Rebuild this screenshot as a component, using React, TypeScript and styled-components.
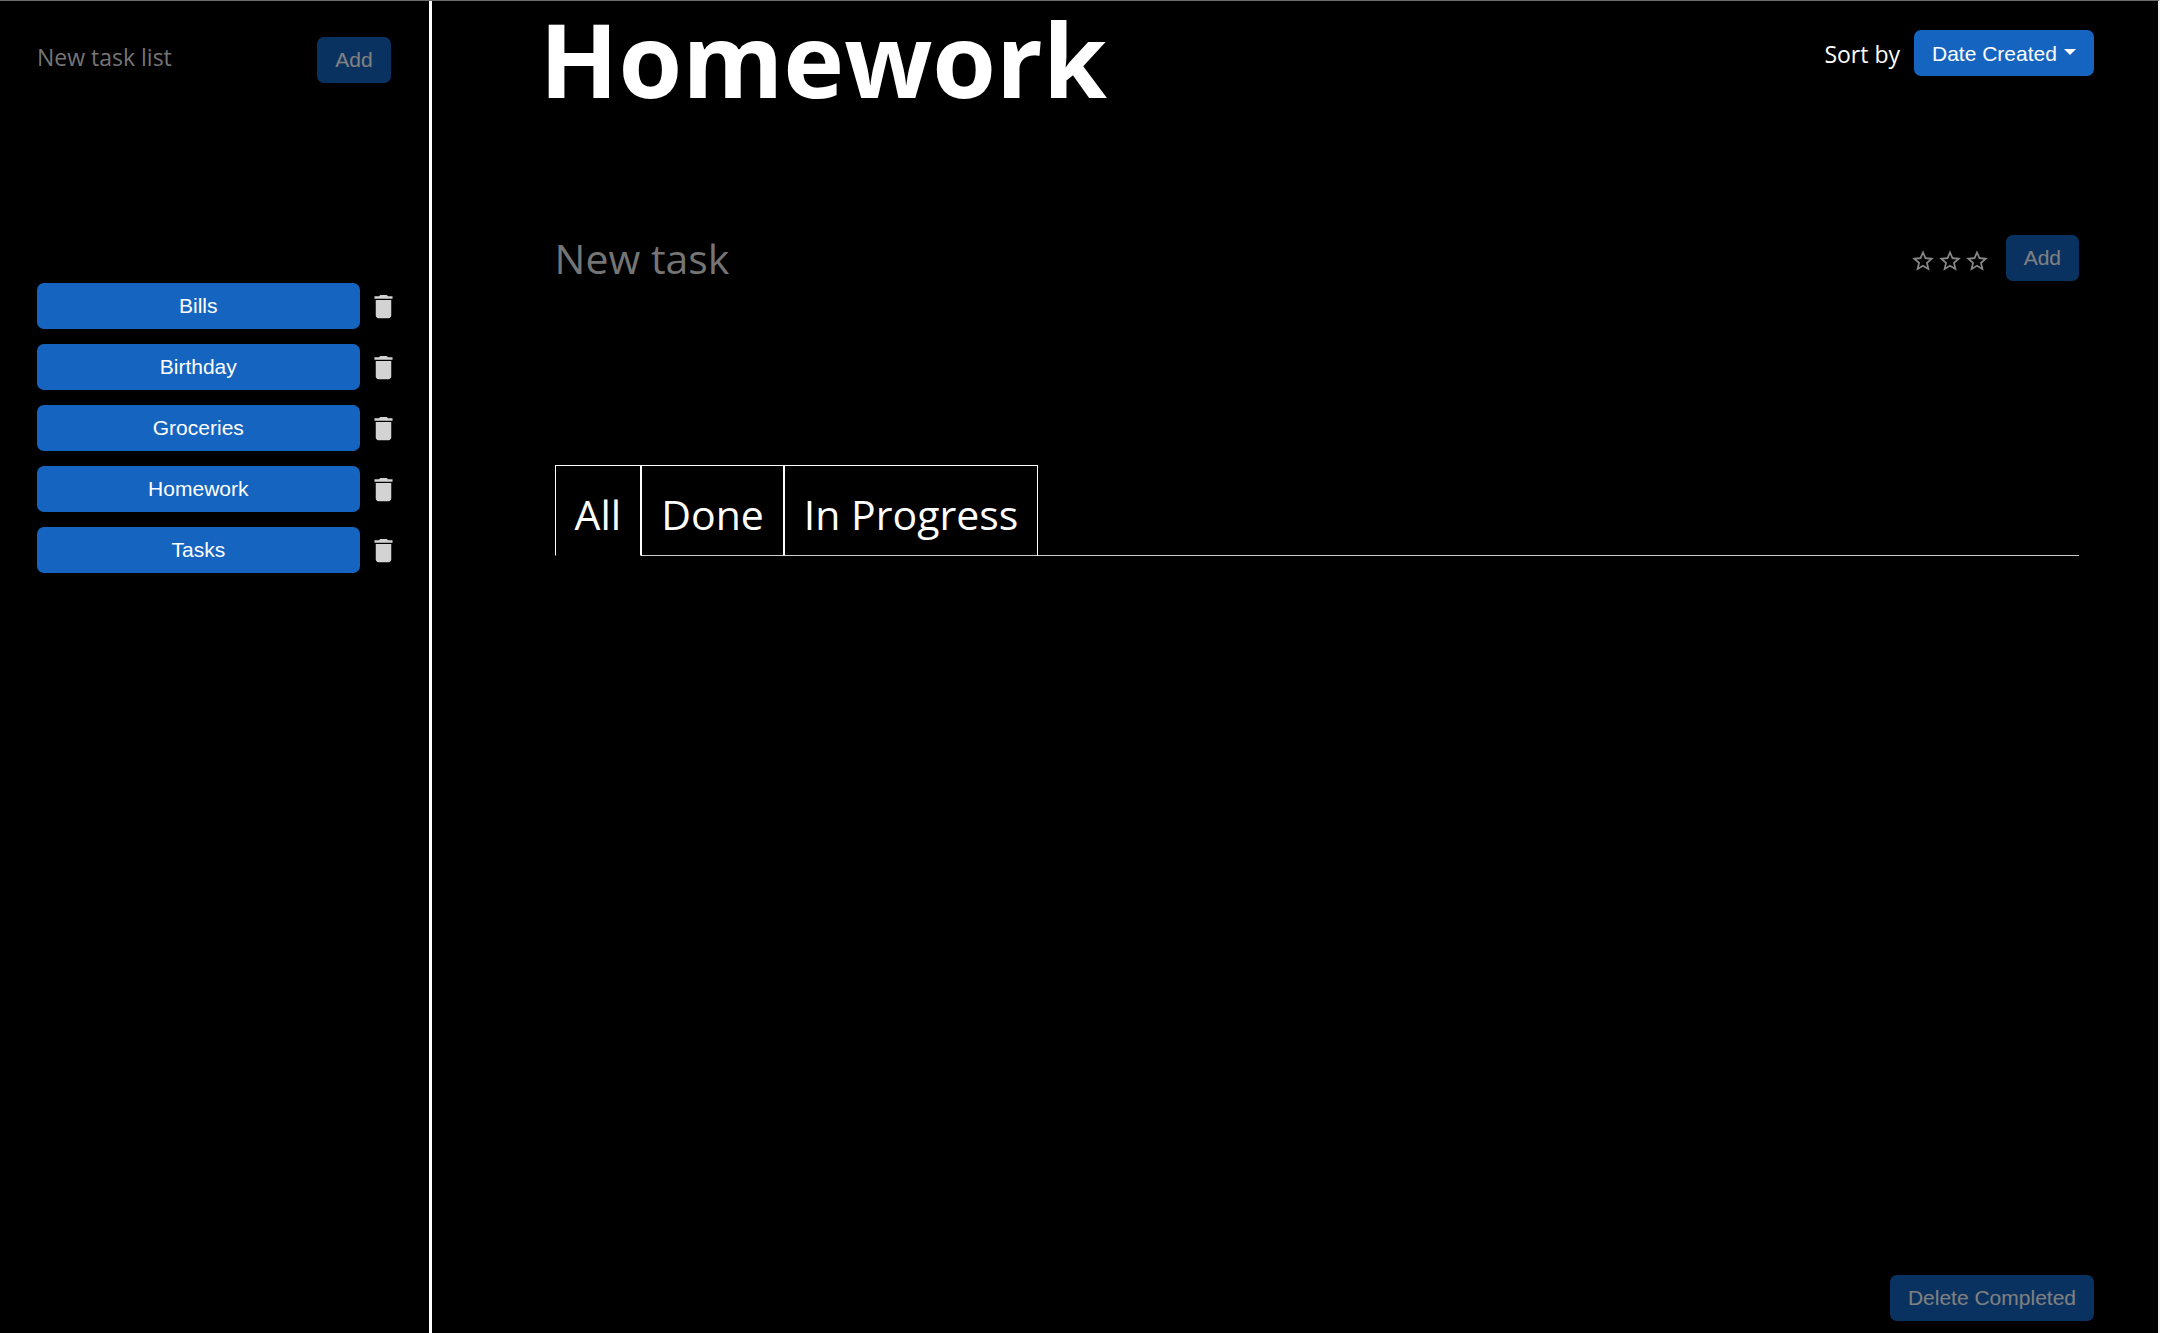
import React from "react";
import styled, { createGlobalStyle } from "styled-components";
import { MdDelete, MdStarBorder } from "react-icons/md";

const uiFont = `"Segoe UI", "Open Sans", "Noto Sans", sans-serif`;
const buttonFont = `Arial, "Liberation Sans", sans-serif`;

const GlobalStyle = createGlobalStyle`
  *, *::before, *::after { box-sizing: border-box; }
  body {
    margin: 0;
    background: #000;
    color: #fff;
    font-family: ${uiFont};
    font-size: 23px;
    line-height: 36px;
  }
`;

const Page = styled.div`
  display: flex;
  min-height: 100vh;
  border-top: 1px solid #6b6b6b;
  border-right: 2px solid #f0f0f0;
`;

const Sidebar = styled.aside`
  flex: 0 0 20%;
  min-width: 0;
  padding: 36px 38px 36px 37px;
  border-right: 3px solid #fff;
`;

const Main = styled.main`
  flex: 1;
  min-width: 0;
  display: flex;
  flex-direction: column;
  padding: 0 64px 12px 108px;
`;

const Button = styled.button`
  height: 46px;
  padding: 0 18px;
  border: 0;
  border-radius: 7px;
  background: #1565c0;
  color: #fff;
  font-family: ${buttonFont};
  font-size: 21px;
  white-space: nowrap;
  cursor: pointer;
  &:disabled {
    opacity: 0.5;
    cursor: default;
  }
`;

const ListForm = styled.form`
  display: flex;
  align-items: flex-start;
  justify-content: space-between;
`;

const TextInput = styled.input<{ $large?: boolean }>`
  flex: 1;
  min-width: 0;
  padding: 0;
  border: 0;
  outline: 0;
  background: transparent;
  color: #fff;
  font-family: ${uiFont};
  font-size: ${(p) => (p.$large ? "41px" : "23px")};
  height: ${(p) => (p.$large ? "60px" : "40px")};
  &::placeholder {
    color: #757575;
    opacity: 1;
  }
`;

const Lists = styled.ul`
  display: flex;
  flex-direction: column;
  gap: 15px;
  margin: 200px 0 0;
  padding: 0;
  list-style: none;
`;

const ListRow = styled.li`
  display: flex;
  align-items: center;
  gap: 8px;
`;

const ListButton = styled(Button)`
  flex: 1;
`;

const IconButton = styled.button`
  display: flex;
  padding: 0;
  border: 0;
  background: none;
  color: #d3d3d3;
  cursor: pointer;
`;

const TrashButton = styled(IconButton)`
  margin-right: -8px;
`;

const Header = styled.header`
  display: flex;
  align-items: flex-start;
  justify-content: space-between;
`;

const Title = styled.h1`
  margin: 0;
  font-size: 103px;
  font-weight: 700;
  line-height: 114px;
`;

const SortGroup = styled.div`
  display: flex;
  align-items: center;
  gap: 14px;
  margin-top: 29px;
`;

const SortLabel = styled.label`
  padding-top: 2px;
`;

const SelectWrap = styled.div`
  position: relative;
  display: flex;
`;

const SortSelect = styled.select`
  appearance: none;
  height: 46px;
  padding: 0 37px 0 18px;
  border: 0;
  border-radius: 7px;
  background: #1565c0;
  color: #fff;
  font-family: ${buttonFont};
  font-size: 21px;
  cursor: pointer;
`;

const Caret = styled.span`
  position: absolute;
  top: 19px;
  right: 18px;
  border: 6px solid transparent;
  border-top-color: #fff;
  border-bottom-width: 0;
  pointer-events: none;
`;

const Content = styled.div`
  flex: 1;
  padding: 0 15px;
`;

const TaskForm = styled.form`
  display: flex;
  align-items: center;
  margin-top: 113px;
`;

const Stars = styled.div`
  display: flex;
  gap: 1px;
  margin-right: 16px;
  padding-top: 5px;
`;

const StarButton = styled(IconButton)`
  color: #888;
`;

const Tabs = styled.div`
  display: flex;
  margin-top: 177px;
`;

const Tab = styled.button<{ $active?: boolean }>`
  height: 91px;
  padding: 6px 19px 0;
  border: 1px solid #fff;
  border-bottom-color: ${(p) => (p.$active ? "transparent" : "#ccc")};
  background: none;
  color: #fff;
  font-family: ${uiFont};
  font-size: 41px;
  cursor: pointer;
`;

const TabRule = styled.div`
  flex: 1;
  border-bottom: 1px solid #ccc;
`;

const Footer = styled.footer`
  display: flex;
  justify-content: flex-end;
`;

const lists = ["Bills", "Birthday", "Groceries", "Homework", "Tasks"];
const tabs = ["All", "Done", "In Progress"];

export default function App() {
  const [current, setCurrent] = React.useState("Homework");
  const [tab, setTab] = React.useState("All");
  const [listName, setListName] = React.useState("");
  const [taskName, setTaskName] = React.useState("");

  return (
    <>
      <GlobalStyle />
      <Page>
        <Sidebar>
          <ListForm onSubmit={(e) => e.preventDefault()}>
            <TextInput
              aria-label="New task list"
              placeholder="New task list"
              value={listName}
              onChange={(e) => setListName(e.target.value)}
            />
            <Button disabled={!listName}>Add</Button>
          </ListForm>
          <Lists>
            {lists.map((name) => (
              <ListRow key={name}>
                <ListButton type="button" onClick={() => setCurrent(name)}>
                  {name}
                </ListButton>
                <TrashButton type="button" aria-label={`Delete ${name}`}>
                  <MdDelete size={31} />
                </TrashButton>
              </ListRow>
            ))}
          </Lists>
        </Sidebar>
        <Main>
          <Header>
            <Title>{current}</Title>
            <SortGroup>
              <SortLabel htmlFor="sort">Sort by</SortLabel>
              <SelectWrap>
                <SortSelect id="sort" defaultValue="Date Created">
                  <option>Date Created</option>
                  <option>Name</option>
                  <option>Priority</option>
                </SortSelect>
                <Caret />
              </SelectWrap>
            </SortGroup>
          </Header>
          <Content>
            <TaskForm onSubmit={(e) => e.preventDefault()}>
              <TextInput
                $large
                aria-label="New task"
                placeholder="New task"
                value={taskName}
                onChange={(e) => setTaskName(e.target.value)}
              />
              <Stars>
                {[1, 2, 3].map((n) => (
                  <StarButton key={n} type="button" aria-label={`Priority ${n}`}>
                    <MdStarBorder size={26} />
                  </StarButton>
                ))}
              </Stars>
              <Button disabled={!taskName}>Add</Button>
            </TaskForm>
            <Tabs role="tablist">
              {tabs.map((name) => (
                <Tab
                  key={name}
                  type="button"
                  role="tab"
                  aria-selected={tab === name}
                  $active={tab === name}
                  onClick={() => setTab(name)}
                >
                  {name}
                </Tab>
              ))}
              <TabRule />
            </Tabs>
          </Content>
          <Footer>
            <Button type="button" disabled>
              Delete Completed
            </Button>
          </Footer>
        </Main>
      </Page>
    </>
  );
}
